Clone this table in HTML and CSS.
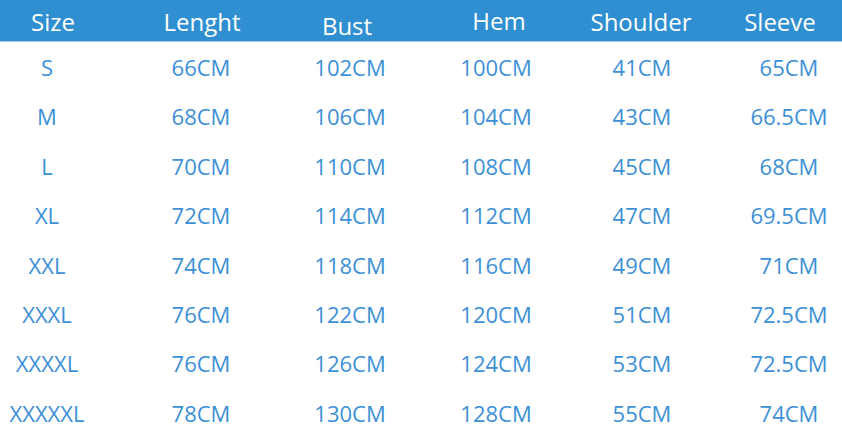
FILE: index.html
```html
<!DOCTYPE html>
<html>
<head>
<meta charset="utf-8">
<link rel="stylesheet" href="styles.css">
</head>
<body>
<div class="chart">
  <div class="head">
    <div class="h h1">Size</div>
    <div class="h h2">Lenght</div>
    <div class="h h3 low">Bust</div>
    <div class="h h4 high">Hem</div>
    <div class="h h5">Shoulder</div>
    <div class="h h6">Sleeve</div>
  </div>
  <div class="rows">
  <div class="row"><div class="c c1">S</div><div class="c c2">66CM</div><div class="c c3">102CM</div><div class="c c4">100CM</div><div class="c c5">41CM</div><div class="c c6">65CM</div></div>
  <div class="row"><div class="c c1">M</div><div class="c c2">68CM</div><div class="c c3">106CM</div><div class="c c4">104CM</div><div class="c c5">43CM</div><div class="c c6">66.5CM</div></div>
  <div class="row"><div class="c c1">L</div><div class="c c2">70CM</div><div class="c c3">110CM</div><div class="c c4">108CM</div><div class="c c5">45CM</div><div class="c c6">68CM</div></div>
  <div class="row"><div class="c c1">XL</div><div class="c c2">72CM</div><div class="c c3">114CM</div><div class="c c4">112CM</div><div class="c c5">47CM</div><div class="c c6">69.5CM</div></div>
  <div class="row"><div class="c c1">XXL</div><div class="c c2">74CM</div><div class="c c3">118CM</div><div class="c c4">116CM</div><div class="c c5">49CM</div><div class="c c6">71CM</div></div>
  <div class="row"><div class="c c1">XXXL</div><div class="c c2">76CM</div><div class="c c3">122CM</div><div class="c c4">120CM</div><div class="c c5">51CM</div><div class="c c6">72.5CM</div></div>
  <div class="row"><div class="c c1">XXXXL</div><div class="c c2">76CM</div><div class="c c3">126CM</div><div class="c c4">124CM</div><div class="c c5">53CM</div><div class="c c6">72.5CM</div></div>
  <div class="row"><div class="c c1">XXXXXL</div><div class="c c2">78CM</div><div class="c c3">130CM</div><div class="c c4">128CM</div><div class="c c5">55CM</div><div class="c c6">74CM</div></div>
  </div>
</div>
</body>
</html>
```

FILE: styles.css
```css
html, body {
  margin: 0;
  padding: 0;
  background: #ffffff;
}
body {
  width: 842px;
  height: 445px;
  overflow: hidden;
  font-family: "Open Sans", "Noto Sans", sans-serif;
}
.chart {
  display: flex;
  flex-direction: column;
}
.head {
  display: flex;
  height: 42px;
  box-sizing: border-box;
  background: #2f8fd1;
  border-bottom: 1px solid #9fcbee;
}
.h {
  color: #ffffff;
  font-size: 24px;
  line-height: 42px;
  text-align: center;
  white-space: nowrap;
  padding-top: 1px;
  height: 41px;
  box-sizing: border-box;
}
.h.low { padding-top: 5px; }
.h.high { padding-top: 0; }
.h1 { width: 106px; }
.h2 { width: 110px; margin-left: 41px; }
.h3 { width: 110px; margin-left: 35px; }
.h4 { width: 110px; margin-left: 42px; }
.h5 { width: 110px; margin-left: 32px; }
.h6 { width: 100px; margin-left: 34px; }

.rows {
  display: grid;
  grid-template-rows: repeat(8, 49.4px);
  padding-top: 1px;
}
.row {
  display: flex;
}
.c {
  color: #3d90d5;
  font-size: 22px;
  line-height: 49.4px;
  text-align: center;
  white-space: nowrap;
}
.c1 { width: 94px; }
.c2 { width: 110px; margin-left: 52px; }
.c3 { width: 110px; margin-left: 39px; }
.c4 { width: 110px; margin-left: 36px; }
.c5 { width: 110px; margin-left: 36px; }
.c6 { width: 100px; margin-left: 42px; }
```
